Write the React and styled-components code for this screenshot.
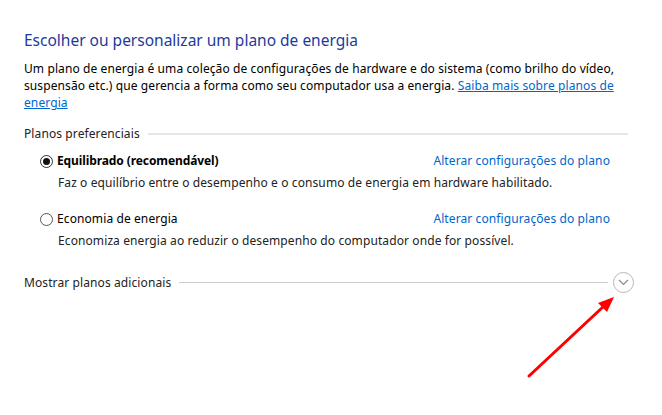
import React from "react";
import styled, { createGlobalStyle } from "styled-components";

const Global = createGlobalStyle`
  html, body { margin: 0; padding: 0; background: #fff; }
  body { font-family: "Noto Sans", "Open Sans", sans-serif; color: #000; }
`;

const Page = styled.div`
  position: relative;
  width: 662px;
  height: 415px;
  box-sizing: border-box;
  padding: 29px 34px 0 24px;
  background: #fff;
`;

const Title = styled.h1`
  margin: 0;
  font-weight: 400;
  font-size: 15.5px;
  line-height: 22px;
  color: #1e3a9c;
`;

const Text = styled.div`
  font-size: 12px;
  letter-spacing: 0.1px;
  line-height: 16px;
`;

const Intro = styled(Text).attrs({ as: "p" })`
  margin: 9px 0 0;
  line-height: 17px;
  color: #000;
`;

const Link = styled.a`
  color: #0066cc;
  text-decoration: ${(p) => (p.$underline ? "underline" : "none")};
  cursor: pointer;
`;

const SectionHeader = styled(Text)`
  display: flex;
  align-items: center;
  gap: 8px;
  margin-top: ${(p) => p.$mt || 0}px;
  margin-right: ${(p) => p.$mr || 0}px;
  color: #222;
`;

const Rule = styled.div`
  flex: 1;
  height: ${(p) => (p.$thick ? 2 : 1)}px;
  background: ${(p) => (p.$thick ? "#e6e6e6" : "#cfcfcf")};
`;

const Plans = styled.div`
  display: flex;
  flex-direction: column;
  gap: 20px;
  padding: 11px 18px 0 16px;
`;

const Plan = styled.div`
  display: flex;
  flex-direction: column;
  gap: 6px;
`;

const PlanHead = styled(Text)`
  display: flex;
  align-items: center;
  justify-content: space-between;
`;

const RadioLabel = styled.label`
  display: flex;
  align-items: center;
  gap: 4px;
  font-weight: ${(p) => (p.$bold ? 700 : 400)};
  letter-spacing: ${(p) => (p.$bold ? "-0.1px" : "inherit")};
  color: #000;
`;

const Radio = styled.span`
  width: 11px;
  height: 11px;
  border-radius: 50%;
  border: 1px solid ${(p) => (p.$checked ? "#333" : "#555")};
  display: inline-flex;
  align-items: center;
  justify-content: center;
  background: #fff;
  &::after {
    content: "";
    width: 7px;
    height: 7px;
    border-radius: 50%;
    background: ${(p) => (p.$checked ? "#111" : "transparent")};
  }
`;

const PlanDesc = styled(Text)`
  padding-left: 18px;
  color: #222;
`;

const ExpandButton = styled.span`
  width: 19px;
  height: 19px;
  border-radius: 50%;
  border: 1px solid #b8b8b8;
  display: inline-flex;
  align-items: center;
  justify-content: center;
  margin-left: -3px;
`;

const Overlay = styled.svg`
  position: absolute;
  left: 0;
  top: 0;
  pointer-events: none;
`;

export default function App() {
  return (
    <>
      <Global />
      <Page>
        <Title>Escolher ou personalizar um plano de energia</Title>
        <Intro>
          Um plano de energia é uma coleção de configurações de hardware e do sistema (como brilho do vídeo,
          suspensão etc.) que gerencia a forma como seu computador usa a energia.{" "}
          <Link $underline>Saiba mais sobre planos de energia</Link>
        </Intro>
        <SectionHeader $mt={15}>
          Planos preferenciais
          <Rule $thick />
        </SectionHeader>
        <Plans>
          <Plan>
            <PlanHead>
              <RadioLabel $bold>
                <Radio $checked />
                Equilibrado (recomendável)
              </RadioLabel>
              <Link>Alterar configurações do plano</Link>
            </PlanHead>
            <PlanDesc>Faz o equilíbrio entre o desempenho e o consumo de energia em hardware habilitado.</PlanDesc>
          </Plan>
          <Plan>
            <PlanHead>
              <RadioLabel>
                <Radio />
                Economia de energia
              </RadioLabel>
              <Link>Alterar configurações do plano</Link>
            </PlanHead>
            <PlanDesc>Economiza energia ao reduzir o desempenho do computador onde for possível.</PlanDesc>
          </Plan>
        </Plans>
        <SectionHeader $mt={23} $mr={-6}>
          Mostrar planos adicionais
          <Rule />
          <ExpandButton>
            <svg width="11" height="7" viewBox="0 0 11 7">
              <path d="M1 1 L5.5 5.5 L10 1" fill="none" stroke="#8a8a8a" strokeWidth="1.2" />
            </svg>
          </ExpandButton>
        </SectionHeader>
        <Overlay width="662" height="415" viewBox="0 0 662 415">
          <line x1="529" y1="376" x2="604" y2="306" stroke="#ff0000" strokeWidth="3" strokeLinecap="round" />
          <polygon points="614,297 598,303 607,312" fill="#ff0000" />
        </Overlay>
      </Page>
    </>
  );
}
